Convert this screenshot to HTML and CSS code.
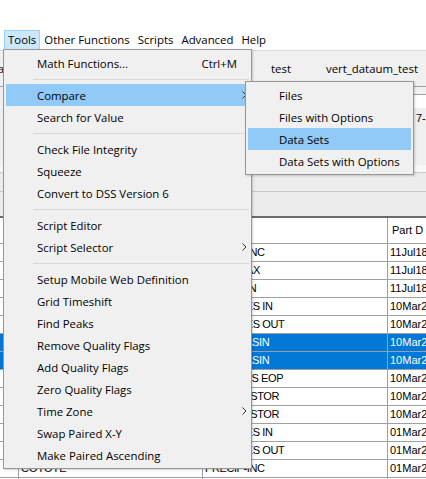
FILE: index.html
```html
<!DOCTYPE html>
<html lang="en">
<head>
<meta charset="utf-8">
<title>DSS Tools menu</title>
<link rel="stylesheet" href="styles.css">
</head>
<body>
<div class="app">
  <div class="caption"></div>
  <nav class="menubar">
    <span class="mb-item open">Tools</span>
    <span class="mb-item">Other Functions</span>
    <span class="mb-item">Scripts</span>
    <span class="mb-item">Advanced</span>
    <span class="mb-item">Help</span>
  </nav>
  <div class="files">
    <div class="f-edge"><span>Data</span></div>
    <div class="f-col f-test">test</div>
    <div class="f-col">vert_dataum_test</div>
  </div>
  <div class="filter"><div class="field"></div></div>
  <div class="info"><span class="info-text">7-Jul-2018</span></div>
  <div class="strip"></div>
  <div class="band"></div>
  <div class="band band-tall"></div>
  <div class="grid">
    <div class="hd"></div><div class="hd">Part B</div><div class="hd">Part C</div><div class="hd">Part D</div>

    <div class="c"></div><div class="c">PINE FLAT</div><div class="c c2">PRECIP-INC</div><div class="c c3">11Jul18</div>
    <div class="c"></div><div class="c">PINE FLAT</div><div class="c c2">TEMP-MAX</div><div class="c c3">11Jul18</div>
    <div class="c"></div><div class="c">PINE FLAT</div><div class="c c2">TEMP-MIN</div><div class="c c3">11Jul18</div>
    <div class="c"></div><div class="c">FOLSOM</div><div class="c c2">FLOW-RES IN</div><div class="c c3">10Mar20</div>
    <div class="c"></div><div class="c">FOLSOM</div><div class="c c2">FLOW-RES OUT</div><div class="c c3">10Mar20</div>
    <div class="c sel"></div><div class="c sel">FOLSOM</div><div class="c c2 sel">FLOW-BASIN</div><div class="c c3 sel">10Mar20</div>
    <div class="c sel"></div><div class="c sel">NIMBUS</div><div class="c c2 sel">FLOW-BASIN</div><div class="c c3 sel">10Mar20</div>
    <div class="c"></div><div class="c">FOLSOM</div><div class="c c2">STOR-RES EOP</div><div class="c c3">10Mar20</div>
    <div class="c"></div><div class="c">FOLSOM</div><div class="c c2">RESERV STOR</div><div class="c c3">10Mar20</div>
    <div class="c"></div><div class="c">NIMBUS</div><div class="c c2">RESERV STOR</div><div class="c c3">10Mar20</div>
    <div class="c"></div><div class="c">COTOTE</div><div class="c c2">FLOW-RES IN</div><div class="c c3">01Mar20</div>
    <div class="c"></div><div class="c">COTOTE</div><div class="c c2">FLOW-RES OUT</div><div class="c c3">01Mar20</div>
    <div class="c"></div><div class="c">COTOTE</div><div class="c c2">PRECIP-INC</div><div class="c c3">01Mar20</div>
    <div class="c"></div><div class="c">COTOTE</div><div class="c c2">STOR-RES EOP</div><div class="c c3">01Mar20</div>
  </div>
</div>

<div class="menu tools-menu">
  <div class="mi"><span class="ml">Math Functions...</span><span class="mk">Ctrl+M</span></div>
  <div class="sep"></div>
  <div class="mi hot"><span class="ml">Compare</span><svg class="arr" width="5" height="8" viewBox="0 0 5 8"><polyline points="0.5,0.5 4,4 0.5,7.5" fill="none" stroke="#333" stroke-width="1"/></svg></div>
  <div class="mi"><span class="ml">Search for Value</span></div>
  <div class="sep"></div>
  <div class="mi"><span class="ml">Check File Integrity</span></div>
  <div class="mi"><span class="ml">Squeeze</span></div>
  <div class="mi"><span class="ml">Convert to DSS Version 6</span></div>
  <div class="sep"></div>
  <div class="mi"><span class="ml">Script Editor</span></div>
  <div class="mi"><span class="ml">Script Selector</span><svg class="arr" width="5" height="8" viewBox="0 0 5 8"><polyline points="0.5,0.5 4,4 0.5,7.5" fill="none" stroke="#333" stroke-width="1"/></svg></div>
  <div class="sep"></div>
  <div class="mi"><span class="ml">Setup Mobile Web Definition</span></div>
  <div class="mi"><span class="ml">Grid Timeshift</span></div>
  <div class="mi"><span class="ml">Find Peaks</span></div>
  <div class="mi"><span class="ml">Remove Quality Flags</span></div>
  <div class="mi"><span class="ml">Add Quality Flags</span></div>
  <div class="mi"><span class="ml">Zero Quality Flags</span></div>
  <div class="mi"><span class="ml">Time Zone</span><svg class="arr" width="5" height="8" viewBox="0 0 5 8"><polyline points="0.5,0.5 4,4 0.5,7.5" fill="none" stroke="#333" stroke-width="1"/></svg></div>
  <div class="mi"><span class="ml">Swap Paired X-Y</span></div>
  <div class="mi"><span class="ml">Make Paired Ascending</span></div>
</div>

<div class="menu sub-menu">
  <div class="mi"><span class="ml">Files</span></div>
  <div class="mi"><span class="ml">Files with Options</span></div>
  <div class="mi hot"><span class="ml">Data Sets</span></div>
  <div class="mi"><span class="ml">Data Sets with Options</span></div>
</div>
</body>
</html>
```

FILE: styles.css
```css
html, body {
  margin: 0;
  padding: 0;
  overflow: hidden;
  background: #ffffff;
}

body {
  width: 426px;
  height: 479px;
  position: relative;
  font-family: "Open Sans", "Noto Sans", sans-serif;
  font-size: 11.4px;
  color: #000000;
}

.app {
  width: 426px;
  height: 479px;
  overflow: hidden;
  display: flex;
  flex-direction: column;
}

.caption {
  flex: none;
  height: 30px;
  background: #ffffff;
}

/* ---------- menu bar ---------- */
.menubar {
  flex: none;
  height: 20px;
  display: flex;
  padding-left: 4px;
  background: #ffffff;
}

.mb-item {
  box-sizing: border-box;
  height: 20px;
  line-height: 18px;
  padding: 0 3px;
  border: 1px solid transparent;
  white-space: nowrap;
}

.mb-item.open {
  background: #cce8ff;
  border-color: #99d1ff;
}

/* ---------- background panels ---------- */
.files {
  flex: none;
  box-sizing: border-box;
  height: 37px;
  border-top: 1px solid #dadada;
  border-bottom: 1px solid #a0a0a0;
  background: #f0f0f0;
  display: flex;
  align-items: center;
  white-space: nowrap;
}

.f-edge {
  width: 4px;
  overflow: hidden;
  display: flex;
  justify-content: flex-end;
}

.f-test {
  margin-left: 267px;
  width: 55px;
}

.filter {
  flex: none;
  height: 21px;
  background: #f0f0f0;
  display: flex;
  align-items: flex-end;
  justify-content: flex-end;
}

.field {
  box-sizing: border-box;
  width: 180px;
  height: 14px;
  background: #ffffff;
  border-top: 1px solid #a0a0a0;
}

.info {
  flex: none;
  height: 57px;
  background: #f0f0f0;
  white-space: nowrap;
}

.info-text {
  display: block;
  margin-left: 416px;
  padding-top: 3px;
  line-height: 15px;
  font-family: "Liberation Sans", Arial, sans-serif;
  font-size: 11px;
}

.strip {
  flex: none;
  height: 7px;
  background: #f8f8f8;
}

.band {
  flex: none;
  box-sizing: border-box;
  height: 19px;
  border-top: 1px solid #c9c9c9;
  background: #ececec;
}

.band-tall {
  height: 25px;
}

/* ---------- data table ---------- */
.grid {
  flex: none;
  border-top: 2px solid #6b6b6b;
  display: grid;
  grid-template-columns: 19px 184px 185px 60px;
  grid-template-rows: 26px;
  grid-auto-rows: 18px;
  background: #ffffff;
  font-family: "Liberation Sans", Arial, sans-serif;
  font-size: 11px;
}

.hd,
.c {
  box-sizing: border-box;
  border-right: 1px solid #a0a0a0;
  border-bottom: 1px solid #a0a0a0;
  padding: 0 2px;
  white-space: nowrap;
  overflow: hidden;
}

.hd {
  line-height: 25px;
  padding-left: 4px;
}

.c {
  line-height: 17px;
}

.c2 {
  letter-spacing: -0.4px;
}

.c.sel {
  background: #0078d7;
  color: #ffffff;
}

/* ---------- popup menus ---------- */
.menu {
  position: absolute;
  box-sizing: border-box;
  border: 1px solid #979797;
  background: #f0f0f0;
  padding: 2px;
  box-shadow: 1px 1px 2px rgba(0, 0, 0, 0.18);
}

.tools-menu {
  left: 3px;
  top: 49px;
  width: 249px;
  z-index: 1;
}

.sub-menu {
  left: 245px;
  top: 81px;
  width: 169px;
  z-index: 2;
}

.mi {
  height: 22px;
  display: flex;
  align-items: center;
  padding-left: 31px;
  white-space: nowrap;
}

.mi.hot {
  background: #91c9f7;
}

.mk {
  margin-left: auto;
  padding-right: 12px;
}

.arr {
  margin-left: auto;
  margin-right: 2px;
}

.sep {
  height: 1px;
  margin: 5px 0 4px 27px;
  background: #d7d7d7;
}
```
